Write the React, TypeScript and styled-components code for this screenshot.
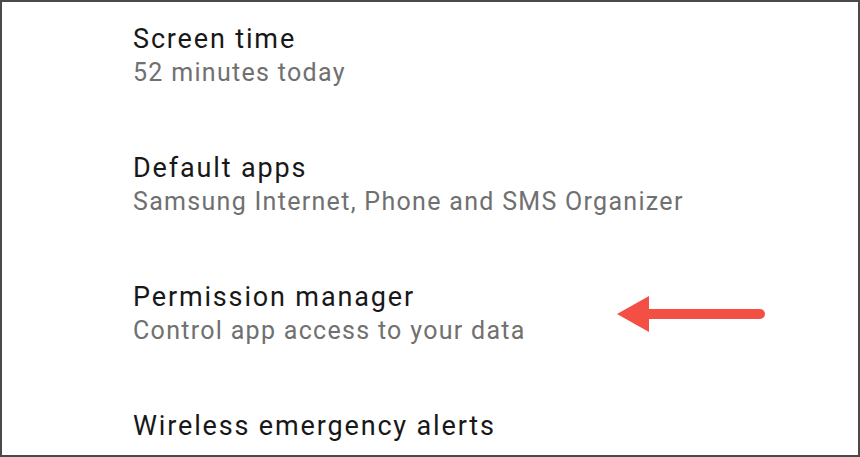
import React from "react";
import styled, { createGlobalStyle } from "styled-components";

const GlobalStyle = createGlobalStyle`
    html, body {
        margin:0;
        padding:0;
        background:#ffffff;
    }
`

const Frame = styled.div`
    box-sizing:border-box;
    position:relative;
    width:860px;
    height:457px;
    border:2px solid #4a4a4a;
    background:#ffffff;
    overflow:hidden;
    font-family:Roboto, "Noto Sans", sans-serif;
`

const List = styled.div`
    display:flex;
    flex-direction:column;
    gap:61px;
    padding:20px 0 0 131px;
`

const Item = styled.div`
    display:flex;
    flex-direction:column;
`

const Title = styled.div`
    font-size:27px;
    line-height:34px;
    letter-spacing:1.85px;
    color:#181818;
`

const Subtitle = styled.div`
    font-size:25px;
    line-height:34px;
    letter-spacing:1.3px;
    color:#707070;
`

const Pointer = styled.svg`
    position:absolute;
    left:610px;
    top:290px;
`

const settings = [
    { title: 'Screen time', summary: '52 minutes today' },
    { title: 'Default apps', summary: 'Samsung Internet, Phone and SMS Organizer' },
    { title: 'Permission manager', summary: 'Control app access to your data' },
    { title: 'Wireless emergency alerts', summary: '' },
]

function App() {
    return (
        <Frame>
            <GlobalStyle />
            <List>
                {settings.map(s => (
                    <Item key={s.title}>
                        <Title>{s.title}</Title>
                        {s.summary && <Subtitle>{s.summary}</Subtitle>}
                    </Item>
                ))}
            </List>
            <Pointer width="160" height="44" viewBox="0 0 160 44">
                <line x1="30" y1="22" x2="148" y2="22" stroke="#f44f45" strokeWidth="10" strokeLinecap="round" />
                <polygon points="5,22 37,4 37,40" fill="#f44f45" />
            </Pointer>
        </Frame>
    )
}

export default App
